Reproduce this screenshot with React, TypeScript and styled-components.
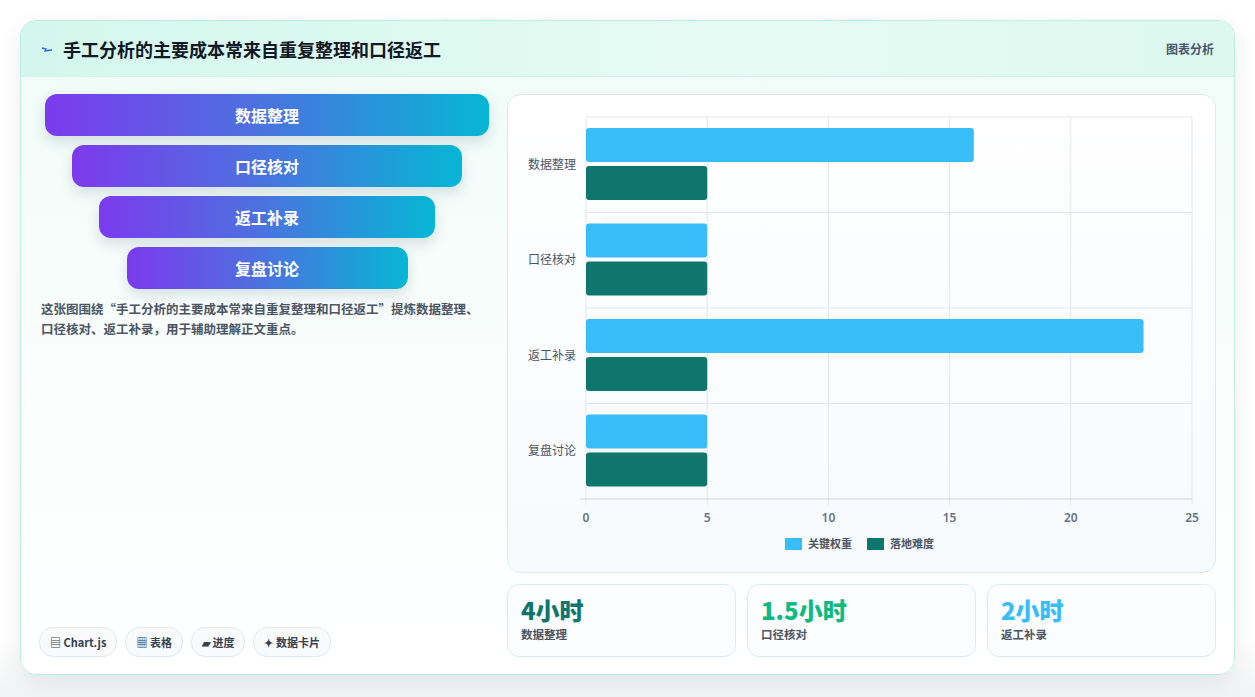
import React from 'react';
import styled, { createGlobalStyle } from 'styled-components';

const GlobalStyle = createGlobalStyle`
  body {
    margin: 0;
    background: #ffffff;
    font-family: "Noto Sans CJK SC", "Noto Sans", sans-serif;
  }
`;

const Page = styled.div`
  width: 1255px;
  height: 697px;
  padding: 20px 20px 22px 20px;
  box-sizing: border-box;
  background: linear-gradient(180deg, #ffffff 0%, #ffffff 92%, #f1f3f4 100%);
`;

const Card = styled.div`
  height: 655px;
  border: 1px solid #bfeee0;
  border-radius: 16px;
  background: linear-gradient(180deg, #effcf8 0%, #fbfefd 60%, #ffffff 100%);
  box-shadow: 0 8px 24px rgba(0, 0, 0, 0.08);
  display: flex;
  flex-direction: column;
  overflow: hidden;
  box-sizing: border-box;
`;

const Header = styled.div`
  height: 55px;
  flex: none;
  display: flex;
  align-items: center;
  justify-content: space-between;
  padding: 0 20px 0 20px;
  background: linear-gradient(90deg, #d3f7ec 0%, #e6fbf4 60%, #dcf8ef 100%);
  border-bottom: 1px solid #d6efe7;
`;

const Title = styled.h1`
  margin: 0;
  font-size: 18px;
  font-weight: 700;
  color: #111827;
  display: flex;
  align-items: center;
  gap: 10px;
`;

const Tag = styled.span`
  font-size: 12px;
  font-weight: 600;
  color: #475569;
`;

const Body = styled.div`
  flex: 1;
  display: flex;
  gap: 18px;
  padding: 17px 18px 17px 18px;
  min-height: 0;
`;

const Left = styled.div`
  width: 452px;
  display: flex;
  flex-direction: column;
`;

const Funnel = styled.div`
  display: flex;
  flex-direction: column;
  align-items: center;
  gap: 9px;
  padding-top: 0;
  margin-left: 6px;
`;

const Step = styled.div<{ $w: number }>`
  width: ${(p) => p.$w}px;
  height: 42px;
  border-radius: 12px;
  background: linear-gradient(90deg, #7c3aed 0%, #4f6ee0 45%, #06b6d4 100%);
  color: #fff;
  font-weight: 700;
  font-size: 16px;
  display: flex;
  align-items: center;
  justify-content: center;
  box-shadow: 0 6px 14px rgba(30, 60, 80, 0.15);
`;

const Desc = styled.p`
  margin: 10px 0 0 2px;
  font-size: 12.5px;
  line-height: 20px;
  font-weight: 600;
  color: #4b5563;
`;

const Chips = styled.div`
  margin-top: auto;
  display: flex;
  gap: 8px;
  padding-bottom: 0;
`;

const Chip = styled.span`
  height: 28px;
  padding: 0 10px;
  border-radius: 14px;
  border: 1px solid #e2e8f0;
  background: #f8fafc;
  font-size: 11px;
  font-weight: 600;
  color: #374151;
  display: flex;
  align-items: center;
  gap: 3px;
`;

const Right = styled.div`
  flex: 1;
  display: flex;
  flex-direction: column;
  gap: 11px;
`;

const ChartCard = styled.div`
  height: 479px;
  border: 1px solid #dde9ec;
  border-radius: 14px;
  background: linear-gradient(180deg, #ffffff 0%, #f7fafc 100%);
  box-sizing: border-box;
`;

const Stats = styled.div`
  display: grid;
  grid-template-columns: repeat(3, 1fr);
  gap: 11px;
  height: 73px;
`;

const Stat = styled.div`
  border: 1px solid #dde9ec;
  border-radius: 12px;
  background: #fbfdfe;
  padding: 9px 13px;
  display: flex;
  flex-direction: column;
`;

const StatValue = styled.div<{ $c: string }>`
  font-size: 24px;
  font-weight: 800;
  line-height: 32px;
  color: ${(p) => p.$c};
`;

const StatLabel = styled.div`
  font-size: 11.5px;
  font-weight: 600;
  color: #4b5563;
`;

const data = [
  { name: '数据整理', a: 16, b: 5 },
  { name: '口径核对', a: 5, b: 5 },
  { name: '返工补录', a: 23, b: 5 },
  { name: '复盘讨论', a: 5, b: 5 },
];

const Chart = () => {
  const x0 = 78;
  const y0 = 22;
  const w = 606;
  const h = 382;
  const band = h / 4;
  const sx = w / 25;
  return (
    <svg width="707" height="477" style={{ display: 'block' }}>
      {[0, 5, 10, 15, 20, 25].map((t) => (
        <g key={t}>
          <line x1={x0 + t * sx} x2={x0 + t * sx} y1={y0} y2={y0 + h + 6} stroke="#e5e7eb" />
          <text x={x0 + t * sx} y={y0 + h + 23} fontSize="12" fontWeight="600" fill="#64748b" textAnchor="middle" fontFamily="Noto Sans, sans-serif">{t}</text>
        </g>
      ))}
      {[0, 1, 2, 3, 4].map((i) => (
        <line key={i} x1={i === 4 ? x0 - 6 : x0} x2={x0 + w} y1={y0 + i * band} y2={y0 + i * band} stroke={i === 4 ? '#cbd5e1' : '#e5e7eb'} />
      ))}
      {data.map((d, i) => {
        const top = y0 + i * band + 11;
        return (
          <g key={d.name}>
            <rect x={x0} y={top} width={d.a * sx} height={34} rx="3" fill="#38bdf8" />
            <rect x={x0} y={top + 38} width={d.b * sx} height={34} rx="3" fill="#0f766e" />
            <text x={x0 - 10} y={y0 + i * band + band / 2 + 4} fontSize="12" fill="#4b5563" textAnchor="end">{d.name}</text>
          </g>
        );
      })}
      <rect x="277" y="443" width="17" height="12" fill="#38bdf8" />
      <text x="300" y="453" fontSize="11" fill="#4b5563" fontWeight="600">关键权重</text>
      <rect x="359" y="443" width="17" height="12" fill="#0f766e" />
      <text x="382" y="453" fontSize="11" fill="#4b5563" fontWeight="600">落地难度</text>
    </svg>
  );
};

export default function App() {
  return (
    <Page>
      <GlobalStyle />
      <Card>
        <Header>
          <Title>
            <svg width="12" height="8" viewBox="0 0 12 8">
              <path d="M1 3 L5 4 L4 6 L11 5" stroke="#2563eb" strokeWidth="1.3" fill="none" />
            </svg>
            手工分析的主要成本常来自重复整理和口径返工
          </Title>
          <Tag>图表分析</Tag>
        </Header>
        <Body>
          <Left>
            <Funnel>
              <Step $w={444}>数据整理</Step>
              <Step $w={390}>口径核对</Step>
              <Step $w={336}>返工补录</Step>
              <Step $w={281}>复盘讨论</Step>
            </Funnel>
            <Desc>
              这张图围绕“手工分析的主要成本常来自重复整理和口径返工”提炼数据整理、口径核对、返工补录，用于辅助理解正文重点。
            </Desc>
            <Chips>
              <Chip>▤ Chart.js</Chip>
              <Chip>▦ 表格</Chip>
              <Chip>▰ 进度</Chip>
              <Chip>✦ 数据卡片</Chip>
            </Chips>
          </Left>
          <Right>
            <ChartCard>
              <Chart />
            </ChartCard>
            <Stats>
              <Stat>
                <StatValue $c="#0f766e">4小时</StatValue>
                <StatLabel>数据整理</StatLabel>
              </Stat>
              <Stat>
                <StatValue $c="#10b981">1.5小时</StatValue>
                <StatLabel>口径核对</StatLabel>
              </Stat>
              <Stat>
                <StatValue $c="#38bdf8">2小时</StatValue>
                <StatLabel>返工补录</StatLabel>
              </Stat>
            </Stats>
          </Right>
        </Body>
      </Card>
    </Page>
  );
}
